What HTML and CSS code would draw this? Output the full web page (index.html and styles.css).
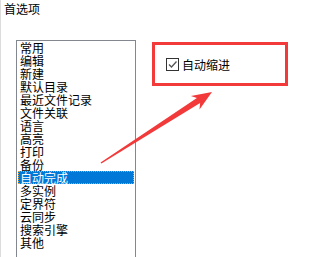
FILE: index.html
```
<!DOCTYPE html>
<html lang="zh-CN">
<head>
    <meta charset="UTF-8">
    <title>首选项</title>
    <link rel="stylesheet" href="styles.css">
</head>
<body>
    <div class="page">
        <div class="title">首选项</div>
        <div class="content">
            <ul class="category-list">
                <li>常用</li>
                <li>编辑</li>
                <li>新建</li>
                <li>默认目录</li>
                <li>最近文件记录</li>
                <li>文件关联</li>
                <li>语言</li>
                <li>高亮</li>
                <li>打印</li>
                <li>备份</li>
                <li class="selected">自动完成</li>
                <li>多实例</li>
                <li>定界符</li>
                <li>云同步</li>
                <li>搜索引擎</li>
                <li>其他</li>
            </ul>
            <div class="options highlight-box">
                <label class="option">
                    <span class="checkbox">
                        <svg width="11" height="11" viewBox="0 0 11 11">
                            <path d="M2 5.5 L4.5 8 L9.5 2.5" fill="none" stroke="#555" stroke-width="1.3"/>
                        </svg>
                    </span>
                    自动缩进
                </label>
            </div>
        </div>
        <!-- annotation arrow -->
        <svg class="arrow" width="332" height="257" viewBox="0 0 332 257">
            <polygon points="100.6,162.4 196.9,98.1 190.9,96.1 212,92 199.5,109.5 200.1,103.1 101.4,163.6" fill="#f23a3a"/>
        </svg>
    </div>
</body>
</html>
```

FILE: styles.css
```
body {
    margin: 0;
    padding: 0;
    background-color: white;
    font-family: "Noto Sans CJK SC", "Noto Sans", sans-serif;
    font-size: 12px;
    color: #000;
    overflow: hidden;
}
.page {
    position: relative;
    width: 331px;
    height: 257px;
    border-left: 1px solid #dcdcdc;
    overflow: hidden;
}
.title {
    padding: 3px 0 0 3px;
    height: 12px;
    line-height: 12px;
}
.content {
    display: flex;
    align-items: flex-start;
    margin-top: 25px;
}
.category-list {
    list-style: none;
    margin: 0 0 0 15px;
    padding: 0 1px;
    width: 116px;
    height: 225px;
    border: 1px solid #828790;
    background-color: white;
}
.category-list li {
    height: 13px;
    line-height: 13px;
    padding-left: 2px;
    white-space: nowrap;
}
.category-list li.selected {
    background-color: #0078d7;
    color: white;
    outline: 1px dotted #f0a030;
    outline-offset: -1px;
}
.highlight-box {
    margin: 2px 0 0 16px;
    width: 130px;
    height: 38px;
    border: 3px solid #f23a3a;
}
.option {
    display: flex;
    align-items: center;
    gap: 3px;
    padding: 13px 0 0 11px;
    line-height: 13px;
}
.checkbox {
    display: flex;
    align-items: center;
    justify-content: center;
    width: 11px;
    height: 11px;
    border: 1px solid #333;
    background-color: white;
}
.arrow {
    position: absolute;
    left: -1px;
    top: 0;
    pointer-events: none;
}
```
